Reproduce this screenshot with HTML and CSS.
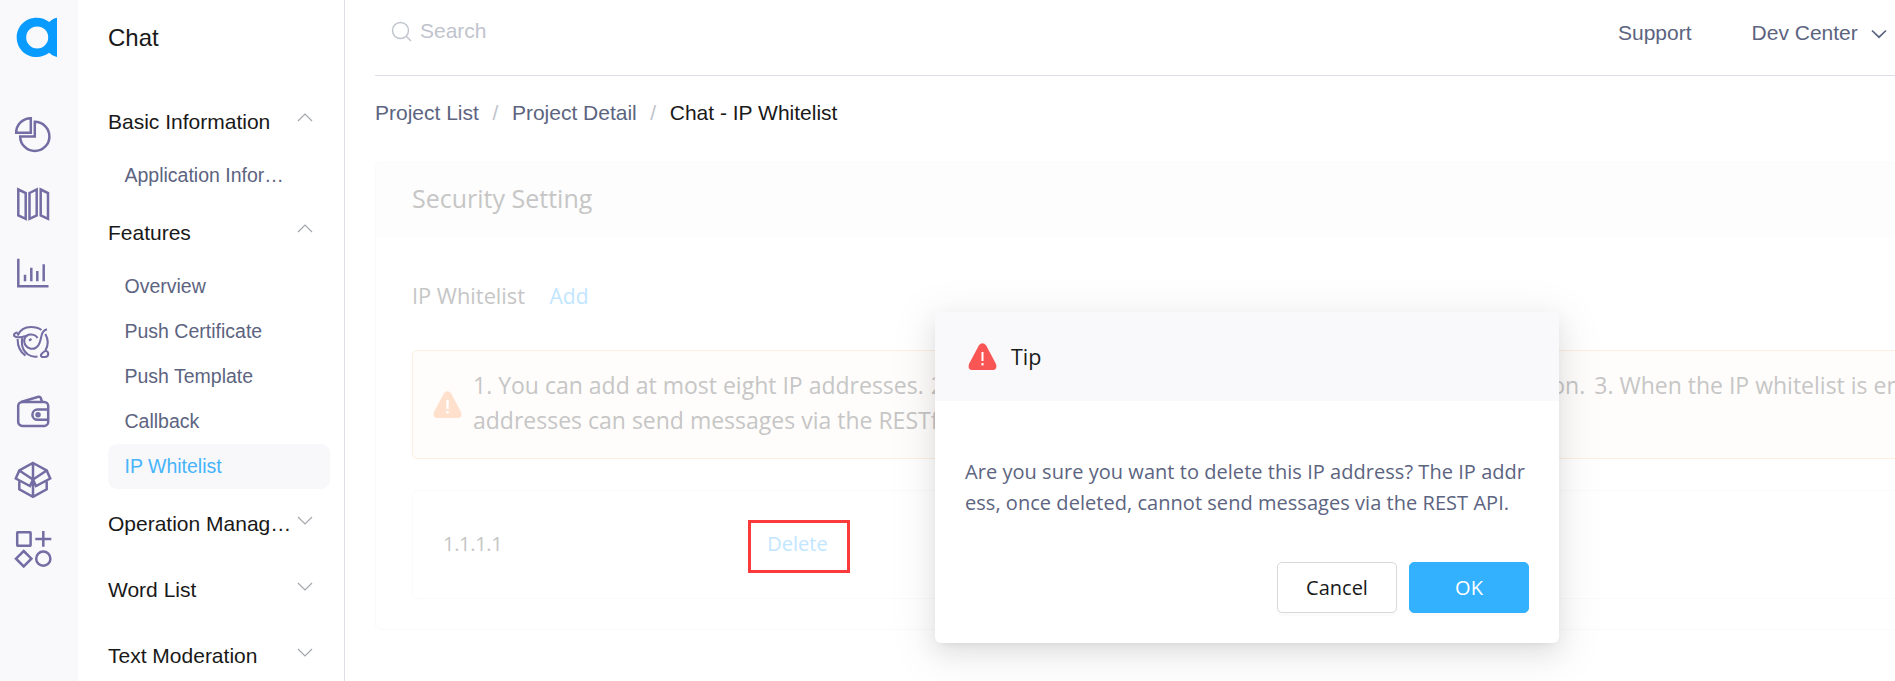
FILE: index.html
```html
<!DOCTYPE html>
<html lang="en">
<head>
<meta charset="utf-8">
<title>Chat - IP Whitelist</title>
<link rel="stylesheet" href="styles.css">
</head>
<body>
<div class="app">
  <nav class="rail">
    <svg class="logo" width="42" height="40" viewBox="0 0 42 40"><path fill="#0a9bff" fill-rule="evenodd" d="M20.500 .8C25.500 .8 29.500 2.300 33.300 5C35.500 3 38 1.300 41 .8V40C38 39.500 35.500 37.800 33.300 35.800C29.500 38.500 25.500 40 20.500 40C9.500 40 .7 31.300 .7 20.400S9.500 .8 20.500 .8ZM21.200 9.400A11 11 0 1 0 21.200 31.400A11 11 0 1 0 21.200 9.400Z"/></svg>
    <svg class="ico" width="40" height="40" viewBox="0 0 40 40"><path d="M17.800 3.200V17.800H3.200A14.600 14.600 0 0 1 17.800 3.200ZM21.800 6.800A14.600 14.600 0 1 1 7.200 21.400H21.800Z"/></svg>
    <svg class="ico" width="40" height="40" viewBox="0 0 40 40"><path d="M5.300 5.500L12.700 9V34.800L5.300 31.500ZM16.500 9L23.700 5.500V31.500L16.500 34.800ZM27.700 5.500L35 9V34.800L27.700 31.500Z"/></svg>
    <svg class="ico" width="40" height="40" viewBox="0 0 40 40"><path d="M5.300 5.700V33.200H35.500M12 28.300V21.700M18.300 28.300V14.700M24.300 28.300V18M30.700 28.300V11.300"/></svg>
    <svg class="ico thin" width="40" height="40" viewBox="0 0 40 40"><path d="M4.700 10.500C.5 11 -.3 14 3.300 15C7 16 11 14.500 15 13.500M4.500 13.500C7 8 12 5 18 5C22 5 26 6.200 28.500 8M34 7.300C27.500 9 29 15.500 26.500 21A7.600 7.600 0 1 1 11.500 17C12.500 14 15.500 12.300 18.300 12.500C21.500 12.700 23.500 14 24.500 16M9.300 16C8 23 10 29 15 32.500C18 34.500 21 35.200 24.500 34.500M4.600 17C4.600 24 7 30 12.500 33.700M32.300 12C35.300 17 35.300 23.500 32.300 28.800M29 35C26 33 30 30.500 32.300 28.800C36.500 29 36 35 32 35Z"/><path d="M16 18.500L18.500 17"/></svg>
    <svg class="ico" width="40" height="40" viewBox="0 0 40 40"><rect x="5.200" y="10.900" width="30" height="24" rx="4"/><path d="M8 11L25.500 5.700Q27 5.400 27.700 6.800L29 10.800M35 18.600H24.500A5.100 5.100 0 0 0 24.500 28.800H35"/><circle cx="25" cy="23.700" r="1.500"/></svg>
    <svg class="ico" width="40" height="40" viewBox="0 0 40 40"><path d="M20 3L33.700 10.500L37.200 18.500L23 26L20 19.500L17 26L2.800 18.500L6.300 10.500ZM20 3V37M6.300 10.500L20 19.500L33.700 10.500M6.300 21.500V29.300L20 36.800L33.700 29.300V21.500"/></svg>
    <svg class="ico" width="40" height="40" viewBox="0 0 40 40"><rect x="4.200" y="3.200" width="13.400" height="13.600" rx=".5"/><path d="M22.300 10H38.300M30.300 2V17.700M10.700 22L18.400 29.700L10.700 37.400L3 29.700Z"/><circle cx="30.300" cy="29.700" r="7.100"/></svg>
  </nav>

  <aside class="sidebar">
    <h1 class="title">Chat</h1>
    <div class="group">Basic Information <svg class="chev up" width="16" height="9" viewBox="0 0 16 9"><path d="M1 8L8 1L15 8"/></svg></div>
    <a class="item">Application Infor…</a>
    <div class="group">Features <svg class="chev up" width="16" height="9" viewBox="0 0 16 9"><path d="M1 8L8 1L15 8"/></svg></div>
    <a class="item">Overview</a>
    <a class="item">Push Certificate</a>
    <a class="item">Push Template</a>
    <a class="item">Callback</a>
    <a class="item active">IP Whitelist</a>
    <div class="group">Operation Manag… <svg class="chev" width="16" height="9" viewBox="0 0 16 9"><path d="M1 1L8 8L15 1"/></svg></div>
    <div class="group">Word List <svg class="chev" width="16" height="9" viewBox="0 0 16 9"><path d="M1 1L8 8L15 1"/></svg></div>
    <div class="group">Text Moderation <svg class="chev" width="16" height="9" viewBox="0 0 16 9"><path d="M1 1L8 8L15 1"/></svg></div>
  </aside>

  <main class="main">
    <header class="topbar">
      <div class="search"><svg width="21" height="21" viewBox="0 0 21 21"><circle cx="9.500" cy="9.500" r="8"/><path d="M15.500 15.500L20 20"/></svg>Search</div>
      <div class="links"><a>Support</a><a class="dev">Dev Center<svg width="16" height="10" viewBox="0 0 16 10"><path d="M1 1.500L8 8.200L15 1.500"/></svg></a></div>
    </header>
    <div class="crumbs"><a>Project List</a><i>/</i><a>Project Detail</a><i>/</i><b>Chat - IP Whitelist</b></div>
    <section class="card">
      <h2 class="card-head">Security Setting</h2>
      <div class="card-body">
        <div class="row-title"><span>IP Whitelist</span><a>Add</a></div>
        <div class="alert">
          <svg width="29" height="27" viewBox="0 0 29 27"><path fill="#ffe0cc" d="M10.800 2.500Q14.500-2 18.200 2.500L28 21Q29.500 26.500 25 27H4Q-.5 26.500 1 21Z"/><path stroke="#fff" stroke-width="2.400" d="M14.500 9V18M14.500 20V22.500"/></svg>
          <div class="alert-text">
            <div class="line"><span>1. You can add at most eight IP addresses.</span><span class="mid"><span>2.</span><span>on.</span></span><span>3. When the IP whitelist is en</span></div>
            <div class="line"><span>addresses can send messages via the RESTful API.</span></div>
          </div>
        </div>
        <div class="table"><span class="ip">1.1.1.1</span><a class="delete">Delete</a></div>
      </div>
    </section>
  </main>
</div>

<div class="dialog">
  <div class="dialog-head"><svg width="29" height="27" viewBox="0 0 29 27"><path fill="#fa5555" d="M10.800 2.500Q14.500-2 18.200 2.500L28 21Q29.500 26.500 25 27H4Q-.5 26.500 1 21Z"/><path stroke="#fff" stroke-width="2" d="M14.500 9V18M14.500 20V22.500"/></svg><span>Tip</span></div>
  <div class="dialog-body"><p>Are you sure you want to delete this IP address? The IP addr</p><p>ess, once deleted, cannot send messages via the REST API.</p></div>
  <div class="dialog-foot"><button class="btn">Cancel</button><button class="btn primary">OK</button></div>
</div>
</body>
</html>
```
FILE: styles.css
```css
* { box-sizing: border-box; }
body { margin: 0; width: 1895px; height: 681px; overflow: hidden; background: #fff; font-family: "Liberation Sans", Arial, sans-serif; font-size: 21px; color: #191919; }
svg { flex: none; fill: none; }
h1, h2, p { margin: 0; font-weight: normal; }

.app { display: flex; width: 1895px; height: 681px; overflow: hidden; }

.rail { flex: none; width: 78px; height: 681px; background: #f9f9fc; display: flex; flex-direction: column; padding: 17px 0 0 13px; gap: 29px; }
.logo { margin: 0 0 29px 3px; }
.ico { stroke: #736da3; stroke-width: 2.5; }
.ico.thin { stroke-width: 2.1; }

.sidebar { flex: none; width: 267px; height: 681px; overflow: hidden; border-right: 1px solid #dedee6; padding-left: 30px; }
.title { height: 87px; font-size: 24px; line-height: 75px; }
.group { display: flex; height: 66px; line-height: 69px; width: 205px; justify-content: space-between; white-space: nowrap; }
.chev { stroke: #a3a6ad; stroke-width: 1.2; margin-top: 27px; }
.chev.up { margin-top: 26px; }
.item { display: block; height: 45px; width: 222px; padding-left: 16.5px; border-radius: 9px; line-height: 45px; font-size: 19.5px; color: #5c6480; white-space: nowrap; }
.item.active { background: #f8f8fb; color: #46b4fa; }

.main { flex: none; width: 1900px; padding-left: 30px; }
.topbar { width: 1600px; height: 76px; border-bottom: 1px solid #dedee6; display: flex; }
.search { display: flex; width: 1243px; padding-left: 16px; gap: 8px; color: #bfc4cd; line-height: 62px; }
.search svg { margin-top: 21px; stroke: #bfc4cd; stroke-width: 1.4; }
.links { display: flex; gap: 60px; line-height: 66px; color: #5c6480; }
.dev { display: flex; gap: 13px; }
.dev svg { margin-top: 29px; stroke: #5c6480; stroke-width: 1.7; }
.crumbs { display: flex; height: 86px; line-height: 73px; color: #5c6480; white-space: nowrap; }
.crumbs i { font-style: normal; color: #bfc4cd; width: 33px; text-align: center; }
.crumbs b { font-weight: normal; color: #191919; }

.card { width: 1700px; height: 468px; border: 1px solid #fafafa; border-radius: 6px; font-family: "Open Sans", "Noto Sans", sans-serif; color: #c6c6c6; }
.card-head { height: 74px; background: #fdfdfd; padding-left: 36px; font-size: 25px; line-height: 71px; }
.card-body { padding: 0 0 0 36px; }
.row-title { display: flex; gap: 24.5px; height: 113px; line-height: 118px; font-size: 21.8px; }
.row-title a { font-size: 21px; }
.row-title a, .delete { color: #c2e6ff; }
.alert { display: flex; align-items: center; height: 109px; border: 1px solid #fdf0e0; border-radius: 5px; background: #fffdfb; padding-left: 20px; gap: 11px; }
.alert-text { font-size: 23px; line-height: 35px; white-space: nowrap; margin-top: -3px; }
.line { display: flex; }
.mid { display: flex; justify-content: space-between; margin: 0 9px 0 7px; width: 654.5px; }
.table { display: flex; margin-top: 31px; height: 109px; border: 1px solid #fafafa; border-radius: 5px; padding: 29px 0 0 30px; font-size: 20px; line-height: 48px; }
.ip { width: 305px; letter-spacing: -.3px; }
.delete { width: 102px; height: 53px; outline: 3px solid #fb3a3c; outline-offset: -3px; text-align: center; padding-right: 3px; }

.dialog { position: absolute; left: 935px; top: 312px; width: 624px; height: 331px; background: #fff; border-radius: 6px; box-shadow: 0 9px 42px 12px rgba(0,0,0,.05), 0 9px 24px rgba(0,0,0,.08), 0 4px 9px -6px rgba(0,0,0,.12); font-family: "Open Sans", "Noto Sans", sans-serif; }
.dialog-head { display: flex; align-items: center; height: 89px; background: #f9f9fc; border-radius: 6px 6px 0 0; padding-left: 33px; gap: 14px; font-size: 21.5px; }
.dialog-body { height: 161px; padding: 55px 0 0 30px; font-size: 20px; letter-spacing: .04px; line-height: 31px; color: #5c6480; white-space: nowrap; }
.dialog-foot { display: flex; justify-content: flex-end; gap: 12px; padding-right: 30px; }
.btn { width: 120px; height: 51px; border: 1px solid #d9d9d9; border-radius: 5px; background: #fff; box-shadow: 0 3px 0 rgba(0,0,0,.016); font: 20px "Open Sans", "Noto Sans", sans-serif; color: #191919; }
.btn.primary { background: #33b1ff; border-color: #33b1ff; color: #fff; }
```
